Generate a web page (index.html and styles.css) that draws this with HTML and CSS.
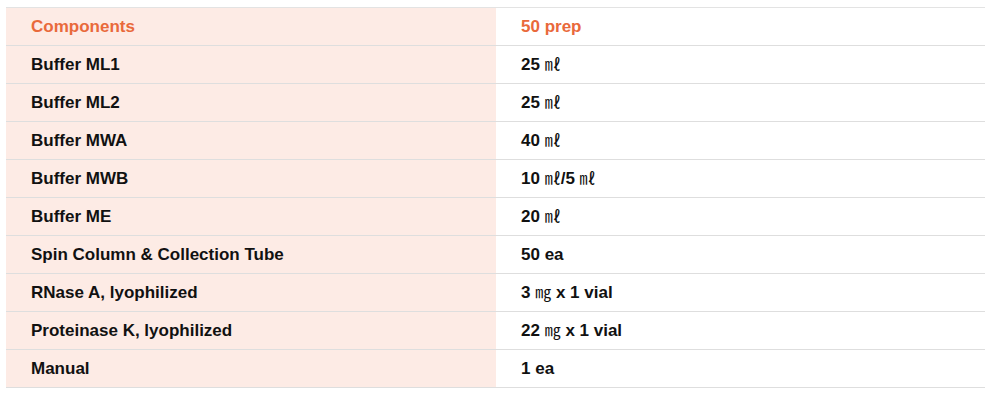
FILE: index.html
```html
<!DOCTYPE html>
<html>
<head>
<meta charset="utf-8">
<link rel="stylesheet" href="styles.css">
</head>
<body>
<table class="spec">
  <thead>
    <tr><th class="c1">Components</th><th class="c2">50 prep</th></tr>
  </thead>
  <tbody>
    <tr><td class="c1">Buffer ML1</td><td class="c2">25 <span class="u">㎖</span></td></tr>
    <tr><td class="c1">Buffer ML2</td><td class="c2">25 <span class="u">㎖</span></td></tr>
    <tr><td class="c1">Buffer MWA</td><td class="c2">40 <span class="u">㎖</span></td></tr>
    <tr><td class="c1">Buffer MWB</td><td class="c2">10 <span class="u">㎖</span>/5 <span class="u">㎖</span></td></tr>
    <tr><td class="c1">Buffer ME</td><td class="c2">20 <span class="u">㎖</span></td></tr>
    <tr><td class="c1">Spin Column &amp; Collection Tube</td><td class="c2">50 ea</td></tr>
    <tr><td class="c1">RNase A, lyophilized</td><td class="c2">3 <span class="u">㎎</span> x 1 vial</td></tr>
    <tr><td class="c1">Proteinase K, lyophilized</td><td class="c2">22 <span class="u">㎎</span> x 1 vial</td></tr>
    <tr><td class="c1">Manual</td><td class="c2">1 ea</td></tr>
  </tbody>
</table>
</body>
</html>
```
FILE: styles.css
```css
html, body {
  margin: 0;
  padding: 0;
  background: #ffffff;
}
body {
  padding: 7px 10px 0 6px;
  font-family: "Liberation Sans", Arial, sans-serif;
}
.spec {
  width: 979px;
  border-collapse: collapse;
  table-layout: fixed;
  border-top: 1px solid #e3e3e3;
}
.spec th, .spec td {
  height: 38px;
  padding: 1px 0 0 25px;
  text-align: left;
  vertical-align: middle;
  font-size: 17px;
  line-height: 20px;
  font-weight: bold;
  color: #111111;
  border-bottom: 1px solid #dedede;
  box-sizing: border-box;
}
.spec th {
  color: #e9693b;
}
.spec .c1 {
  width: 490px;
  background: #fdebe5;
}
.spec .c2 {
  background: #ffffff;
}
.u {
  font-family: "Noto Sans CJK KR", sans-serif;
  font-weight: normal;
  font-size: 16px;
  line-height: 1;
}
```
